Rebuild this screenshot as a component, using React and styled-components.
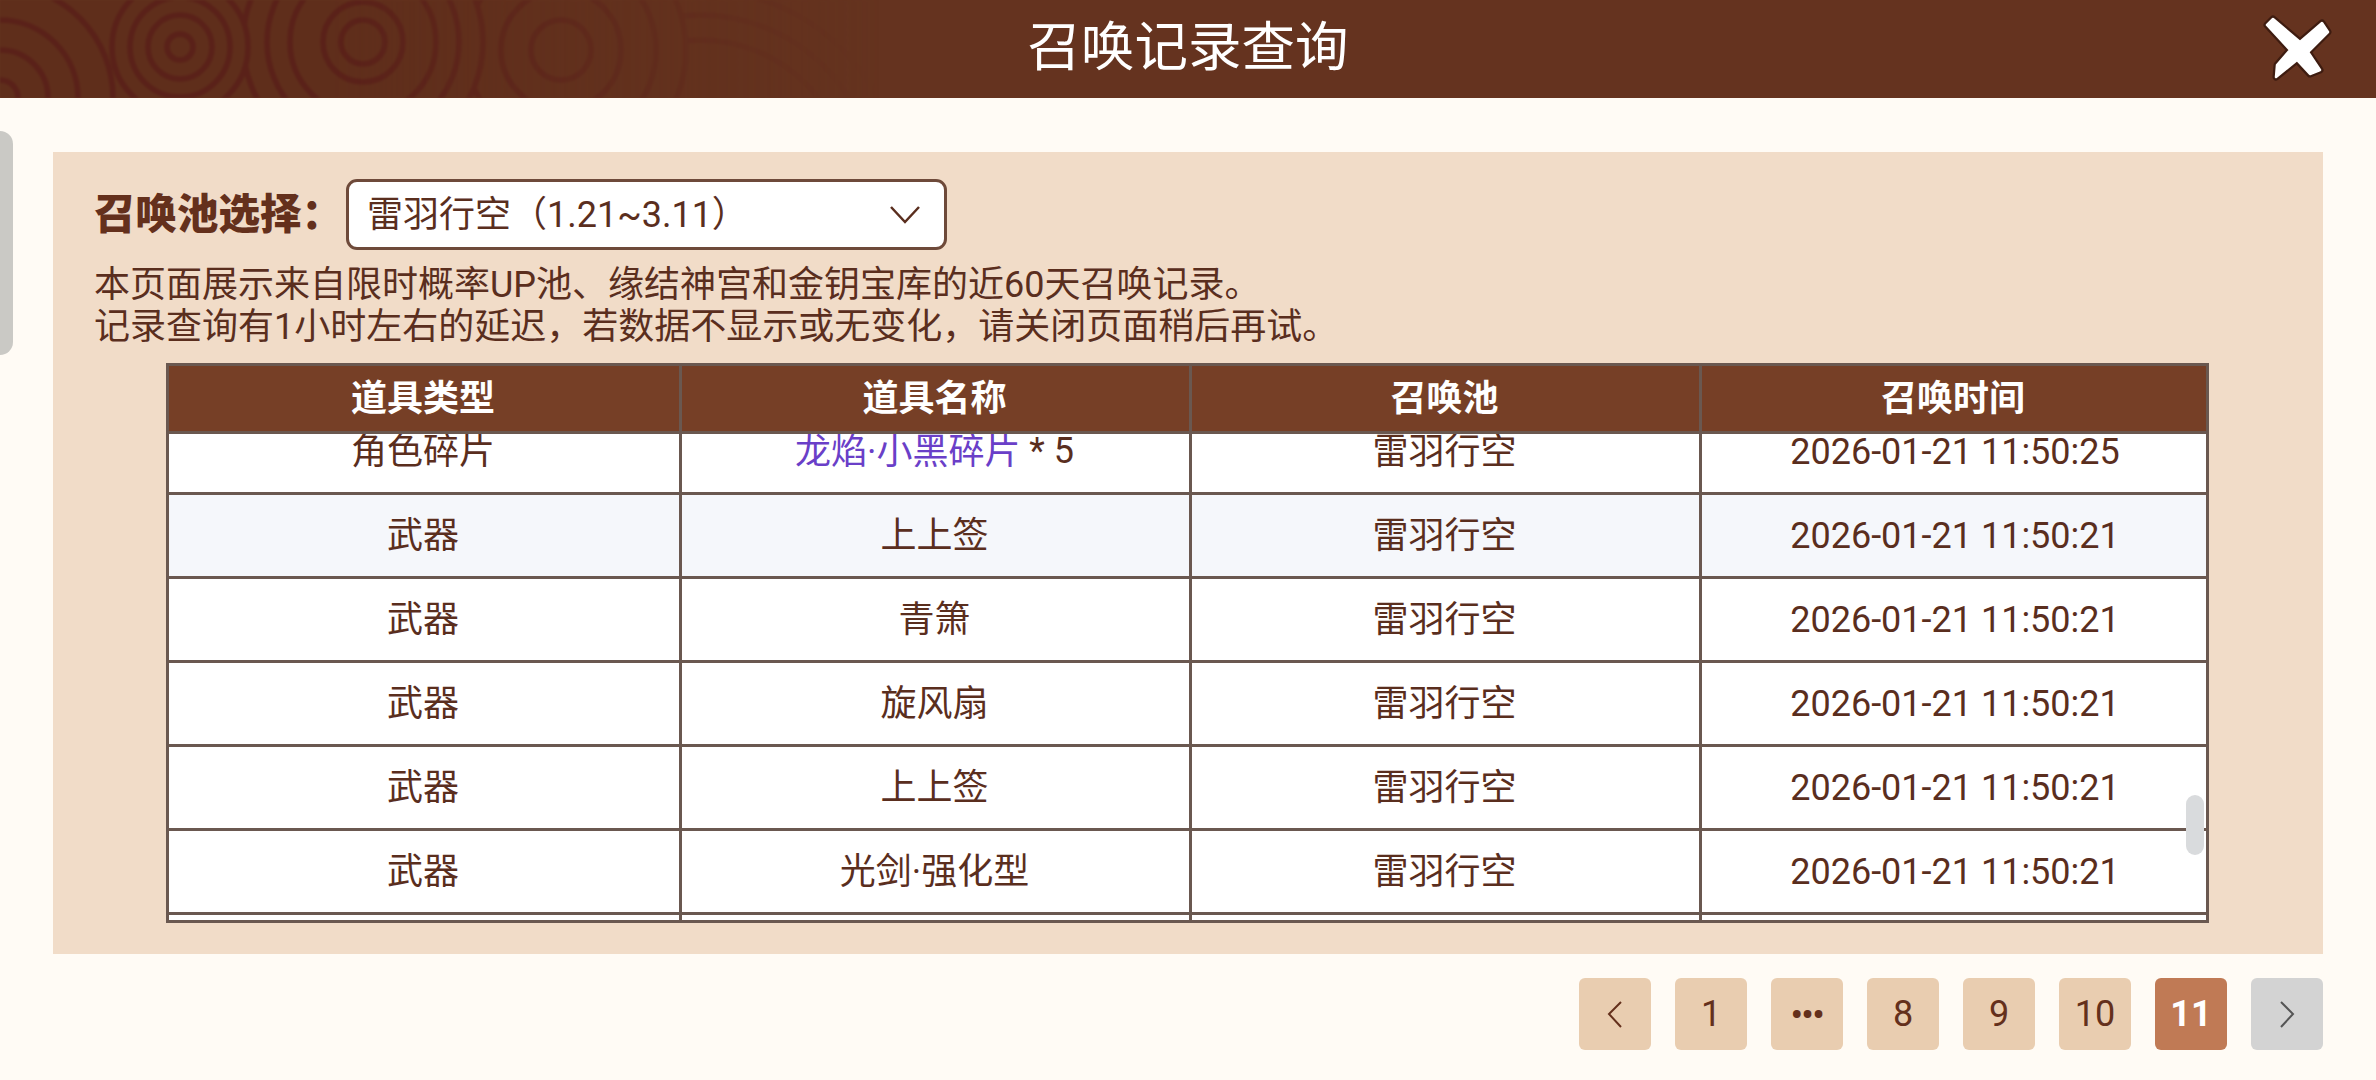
import React from 'react';
import styled, { createGlobalStyle } from 'styled-components';

const GlobalStyle = createGlobalStyle`
  html, body {
    margin: 0;
    padding: 0;
    background: #fffbf5;
  }
  * {
    box-sizing: border-box;
  }
`;

const Page = styled.div`
  position: relative;
  width: 2376px;
  height: 1080px;
  overflow: hidden;
  background: #fffbf5;
  color: #5a2e1e;
  font-family: Roboto, "Noto Sans CJK SC", sans-serif;
  font-size: 36px;
`;

const Header = styled.header`
  position: relative;
  display: flex;
  align-items: center;
  justify-content: center;
  height: 98px;
  background: #65331f;
  overflow: hidden;
`;

const Pattern = styled.svg`
  position: absolute;
  left: 0;
  top: 0;
  filter: blur(0.8px);
`;

const Title = styled.h1`
  position: relative;
  margin: 0 0 13px;
  color: #fff;
  font-size: 53.5px;
  font-weight: 400;
`;

const CloseButton = styled.svg`
  position: absolute;
  left: 2261px;
  top: 11px;
  filter: blur(0.5px);
`;

const SideHandle = styled.div`
  position: absolute;
  left: 0;
  top: 131px;
  width: 13px;
  height: 224px;
  background: #cac9c5;
  border-radius: 0 14px 14px 0;
`;

const Panel = styled.section`
  margin: 54px 53px 0;
  padding: 27px 0 31px;
  background: #f1dcc8;
`;

const PoolRow = styled.div`
  display: flex;
  align-items: center;
  padding-left: 41px;
`;

const PoolLabel = styled.label`
  width: 252px;
  padding-bottom: 7px;
  color: #64301c;
  font-size: 41.5px;
  font-weight: 900;
  white-space: pre;
`;

const PoolSelect = styled.div`
  display: flex;
  align-items: center;
  justify-content: space-between;
  width: 601px;
  height: 71px;
  padding: 0 24px 0 18px;
  background: #fff;
  border: 3px solid #6e4a3a;
  border-radius: 11px;
`;

const PoolValue = styled.span`
  padding-bottom: 8px;
`;

const Notes = styled.div`
  margin-top: 14px;
  padding-left: 41px;
  line-height: 42px;
`;

const Table = styled.div`
  display: flex;
  flex-direction: column;
  height: 560px;
  margin: 15px 114px 0 113px;
  border: 3px solid #6a5850;
  background: #fff;
`;

const Row = styled.div`
  display: grid;
  grid-template-columns: 513px 510px 510px 1fr;
  flex: none;
  height: ${props => (props.$head ? '68px' : '84px')};
  background: ${props => (props.$head ? '#763f26' : props.$tint ? '#f5f7fb' : '#fff')};
  color: ${props => (props.$head ? '#fff' : 'inherit')};
  font-weight: ${props => (props.$head ? 700 : 400)};
  border-bottom: 3px solid #6a5850;
`;

const Cell = styled.div`
  display: flex;
  align-items: center;
  justify-content: center;
  padding: ${props => (props.$raised ? '0 2px 8px 0' : '0 0 0 2px')};
  white-space: pre;
  border-right: 3px solid #6a5850;

  &:last-child {
    border-right: 0;
  }
`;

const TableBody = styled.div`
  position: relative;
  flex: 1;
  overflow: hidden;
`;

const RowList = styled.div`
  margin-top: -23px;
`;

const Thumb = styled.div`
  position: absolute;
  right: 2px;
  top: 361px;
  width: 18px;
  height: 60px;
  background: #d9dbdd;
  border-radius: 9px;
`;

const ItemLink = styled.span`
  color: #6a3fc8;
`;

const ItemCount = styled.span`
  padding-top: 6px;
`;

const Pagination = styled.nav`
  display: flex;
  justify-content: flex-end;
  gap: 24px;
  margin: 24px 53px 0 0;
`;

const PageButton = styled.div`
  display: flex;
  align-items: center;
  justify-content: center;
  width: 72px;
  height: 72px;
  border-radius: 6px;
  background: ${props => (props.$active ? '#c07a55' : props.$disabled ? '#d3d3d3' : '#e9cdb0')};
  color: ${props => (props.$active ? '#fff' : '#64301c')};
  font-weight: ${props => (props.$active ? 700 : 400)};
`;

const Dots = styled.span`
  font-size: 33px;
  font-weight: 700;
  letter-spacing: -1px;
`;

const rows = [
  { type: '角色碎片', link: '龙焰·小黑碎片', suffix: ' * 5', time: '2026-01-21 11:50:25' },
  { type: '武器', name: '上上签', time: '2026-01-21 11:50:21', tint: true },
  { type: '武器', name: '青箫', time: '2026-01-21 11:50:21' },
  { type: '武器', name: '旋风扇', time: '2026-01-21 11:50:21' },
  { type: '武器', name: '上上签', time: '2026-01-21 11:50:21' },
  { type: '武器', name: '光剑·强化型', time: '2026-01-21 11:50:21' },
  { type: '武器', name: '', time: '' },
];

function HeaderPattern() {
  const ring = (cx, cy, radii) => radii.slice().reverse().map(r => (
    <circle key={`${cx}-${r}`} cx={cx} cy={cy} r={r} fill="#5f2e1b" stroke="#5a2119" strokeWidth="5.5" />
  ));
  return (
    <Pattern width="1100" height="98" viewBox="0 0 1100 98">
      <defs>
        <linearGradient id="fade">
          <stop offset="0" stopColor="#fff" />
          <stop offset="0.3" stopColor="#fff" />
          <stop offset="0.8" stopColor="#000" />
        </linearGradient>
        <mask id="fadeMask">
          <rect width="1100" height="98" fill="url(#fade)" />
        </mask>
      </defs>
      <g mask="url(#fadeMask)">
        <rect width="1100" height="98" fill="#5f2e1b" />
        {ring(700, 190, [150, 175, 200])}
        {ring(561, 50, [30, 60, 95, 125])}
        {ring(363, 42, [22, 40, 73, 96, 120])}
        {ring(180, 47, [13, 32, 50, 68])}
        {ring(60, -60, [50])}
        {ring(0, 98, [18, 48, 78, 113])}
      </g>
    </Pattern>
  );
}

function CloseIcon() {
  const d = 'M6 14 L12 8 L39 31 L61 12 L67 21 L47 41 L59 59 L49 63 L36 49 L15 66 L16 54 L29 39 Z';
  return (
    <CloseButton width="74" height="72" viewBox="0 0 74 72">
      <path d={d} fill="#3e1c10" stroke="#3e1c10" strokeWidth="7" strokeLinejoin="round" />
      <path d={d} fill="#fff" stroke="#fff" strokeWidth="2.5" strokeLinejoin="round" />
    </CloseButton>
  );
}

function Chevron({ points, width, height, color, strokeWidth }) {
  return (
    <svg width={width} height={height} viewBox={`0 0 ${width} ${height}`}>
      <polyline points={points} fill="none" stroke={color} strokeWidth={strokeWidth} />
    </svg>
  );
}

function App() {
  return (
    <Page>
      <GlobalStyle />
      <Header>
        <HeaderPattern />
        <Title>召唤记录查询</Title>
        <CloseIcon />
      </Header>
      <SideHandle />
      <Panel>
        <PoolRow>
          <PoolLabel>{'召唤池选择\uFF1A'}</PoolLabel>
          <PoolSelect>
            <PoolValue>{'雷羽行空\uFF081.21~3.11\uFF09'}</PoolValue>
            <Chevron points="1,1 15,16 29,1" width={30} height={18} color="#5a2e1e" strokeWidth={2.5} />
          </PoolSelect>
        </PoolRow>
        <Notes>
          {'本页面展示来自限时概率UP池\u3001缘结神宫和金钥宝库的近60天召唤记录\u3002'}
          <br />
          {'记录查询有1小时左右的延迟\uFF0C若数据不显示或无变化\uFF0C请关闭页面稍后再试\u3002'}
        </Notes>
        <Table>
          <Row $head>
            <Cell $raised>道具类型</Cell>
            <Cell $raised>道具名称</Cell>
            <Cell $raised>召唤池</Cell>
            <Cell $raised>召唤时间</Cell>
          </Row>
          <TableBody>
            <RowList>
              {rows.map((row, i) => (
                <Row key={i} $tint={row.tint}>
                  <Cell $raised>{row.type}</Cell>
                  <Cell $raised>
                    {row.link ? <ItemLink>{row.link}</ItemLink> : row.name}
                    {row.suffix && <ItemCount>{row.suffix}</ItemCount>}
                  </Cell>
                  <Cell $raised>雷羽行空</Cell>
                  <Cell>{row.time}</Cell>
                </Row>
              ))}
            </RowList>
            <Thumb />
          </TableBody>
        </Table>
      </Panel>
      <Pagination>
        <PageButton>
          <Chevron points="14,1 2,13 14,26" width={16} height={27} color="#64301c" strokeWidth={2} />
        </PageButton>
        <PageButton>1</PageButton>
        <PageButton><Dots>•••</Dots></PageButton>
        <PageButton>8</PageButton>
        <PageButton>9</PageButton>
        <PageButton>10</PageButton>
        <PageButton $active>11</PageButton>
        <PageButton $disabled>
          <Chevron points="2,1 14,13 2,26" width={16} height={27} color="#555" strokeWidth={2} />
        </PageButton>
      </Pagination>
    </Page>
  );
}

export default App;
